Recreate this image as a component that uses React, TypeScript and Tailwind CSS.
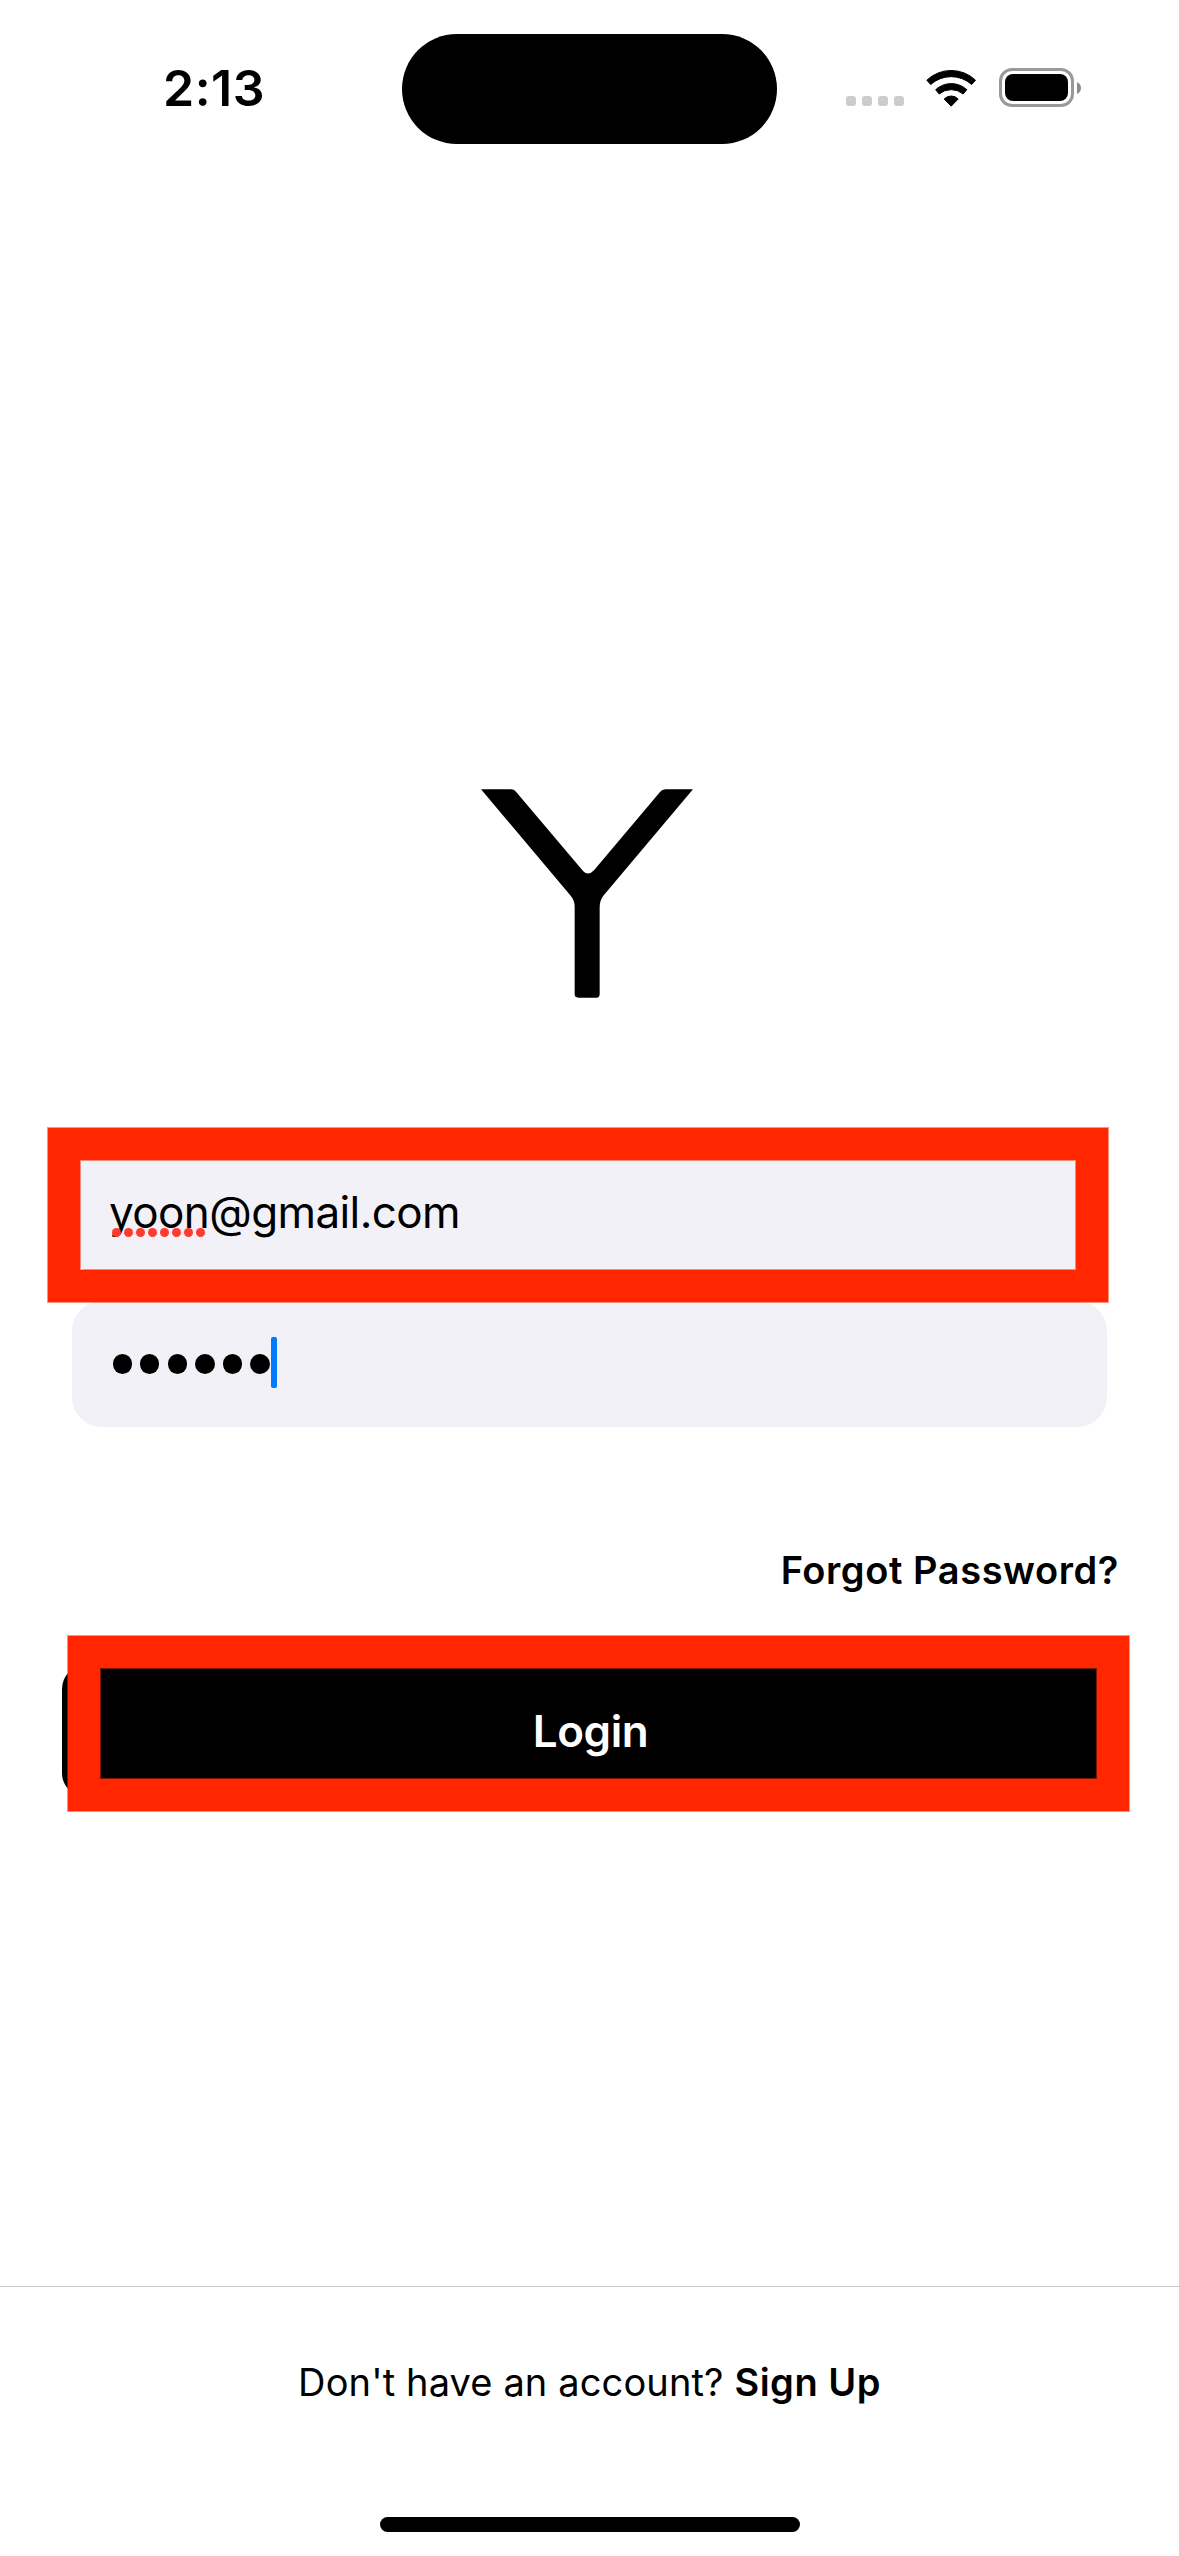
import React from "react";

const TYPO_DOTS = [0, 1, 2, 3, 4, 5, 6, 7];
const PASSWORD_DOTS = [0, 1, 2, 3, 4, 5];
const SIGNAL_DOTS = [0, 1, 2, 3];

function WifiIcon() {
  return (
    <svg className="ml-[22px] h-[38px] w-[50px]" viewBox="319 85 150 114">
      <g fill="#000" stroke="#000" strokeWidth="3" strokeLinejoin="round">
        <path d="M321.500 118.500 A106 106 0 0 1 467.500 118.500 L456 131.500 A92 92 0 0 0 333 131.500 Z" />
        <path d="M348 147 A69 69 0 0 1 441.500 147 L430.500 160 A56 56 0 0 0 358.500 160 Z" />
        <path d="M373.500 175 A29 29 0 0 1 415.500 175 L394.500 196.500 Z" />
      </g>
    </svg>
  );
}

function BatteryIcon() {
  return (
    <div className="ml-[23px] flex items-center">
      <div className="h-[39px] w-[75px] rounded-[13px] border-[3px] border-[#999999] p-[3px]">
        <div className="h-full w-full rounded-[8px] bg-black" />
      </div>
      <svg className="ml-[3px] h-[12px] w-[4px]" viewBox="0 0 4 12">
        <path d="M0 0 Q4 2 4 6 T0 12 Z" fill="#8c8c8c" />
      </svg>
    </div>
  );
}

function StatusBar() {
  return (
    <header className="flex h-[177px] items-start">
      <div className="mt-[58px] w-[402px] pl-[163px] text-[50px] leading-[60px] font-semibold tracking-[0.5px]">
        2:13
      </div>
      <div className="mt-[34px] h-[110px] w-[375px] rounded-full bg-black" />
      <div className="mt-[68px] ml-[69px] flex h-[39px] items-center">
        <div className="flex gap-[6px] pt-[27px]">
          {SIGNAL_DOTS.map((i) => (
            <span key={i} className="size-[10px] rounded-[3px] bg-[#cccccc]" />
          ))}
        </div>
        <WifiIcon />
        <BatteryIcon />
      </div>
    </header>
  );
}

function Logo() {
  return (
    <svg className="mt-[612px] ml-[481px] h-[209px] w-[212px]" viewBox="63 57 636 627">
      <path
        fill="#000"
        d="M63 58 H153 Q162 58 168 65 L366 299 Q384 321 402 301 L600 66 Q606 58 616 58 H699 L430 377 Q419 391 419 412 V672 Q419 683 409 683 H355 Q344 683 344 673 V410 Q344 391 332 377 Z"
      />
    </svg>
  );
}

function Highlight({ className }: { className: string }) {
  return (
    <div
      className={
        "pointer-events-none absolute border-[32px] border-[#ff2600] shadow-[0_0_0_1px_rgba(255,38,0,0.5),inset_0_0_0_1px_rgba(255,38,0,0.5)] " +
        className
      }
    />
  );
}

export default function App() {
  return (
    <div className="flex h-[2556px] w-[1179px] flex-col overflow-hidden bg-white font-['Inter',sans-serif] text-black">
      <StatusBar />
      <Logo />

      <main className="flex flex-1 flex-col pt-[151px]">
        <div className="relative mx-[72px] flex h-[126px] items-center rounded-[30px] bg-[#f2f1f7] pl-[37px] text-[44px]">
          <span className="relative tracking-[-0.6px] whitespace-nowrap">
            yoon@gmail.com
            <span className="absolute top-[49px] left-[3px] flex gap-[3px]">
              {TYPO_DOTS.map((i) => (
                <span key={i} className="size-[9px] rounded-full bg-[#ff3b30]" />
              ))}
            </span>
          </span>
          <Highlight className="top-[-21px] left-[-24px] h-[174px] w-[1060px]" />
        </div>

        <div className="mx-[72px] mt-[26px] flex h-[126px] items-center rounded-[30px] bg-[#f2f1f7] pl-[40.5px]">
          <div className="flex gap-[8.3px]">
            {PASSWORD_DOTS.map((i) => (
              <span key={i} className="size-[19.3px] rounded-full bg-black" />
            ))}
          </div>
          <span className="relative top-[-1.5px] ml-[1.5px] h-[51px] w-[6px] rounded-[2px] bg-[#007aff]" />
        </div>

        <div className="mt-[120px] mr-[60px] text-right text-[38px] leading-[46px] font-semibold tracking-[0.57px]">
          Forgot Password?
        </div>

        <button className="relative mt-[72px] mr-[62px] ml-[62px] h-[132px] rounded-[24px] bg-black pl-[2px] text-[44px] font-semibold tracking-[-0.4px] text-white">
          Login
          <Highlight className="top-[-29px] left-[6px] h-[175px] w-[1061px]" />
        </button>
      </main>

      <footer className="flex h-[270px] flex-col items-center border-t border-[#c6c6c8]">
        <p className="mt-[72px] text-[38px] leading-[46px] tracking-[0.13px] whitespace-nowrap">
          Don't have an account? <span className="font-semibold tracking-[0.5px]">Sign Up</span>
        </p>
        <div className="mt-[112px] h-[15px] w-[420px] rounded-full bg-black" />
      </footer>
    </div>
  );
}
